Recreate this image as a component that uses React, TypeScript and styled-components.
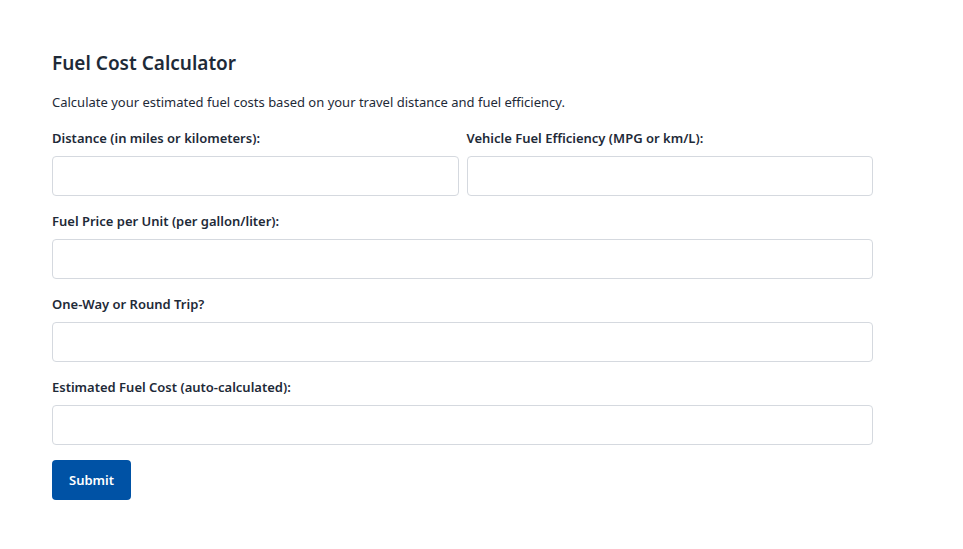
import React, { FC } from 'react'
import styled, { createGlobalStyle } from 'styled-components'

const GlobalStyle = createGlobalStyle`
  body {
    margin: 0;
    background: #fff;
    font-family: 'Noto Sans', 'Open Sans', sans-serif;
    color: #1e2a38;
  }
`

const Page = styled.div`
  width: 821px;
  padding: 50px 0 0 52px;
`

const Title = styled.h2`
  margin: 0 0 16px;
  font-size: 19px;
  line-height: 26px;
  font-weight: 600;
`

const Intro = styled.p`
  margin: 0 0 17px;
  font-size: 13px;
  line-height: 20px;
`

const Form = styled.form`
  display: flex;
  flex-direction: column;
  gap: 16px;
`

const Row = styled.div`
  display: grid;
  grid-template-columns: 1fr 1fr;
  gap: 8px;
`

const Field = styled.div`
  display: flex;
  flex-direction: column;
`

const Label = styled.label`
  font-size: 13px;
  line-height: 18px;
  font-weight: 600;
  margin-bottom: 9px;
`

const Input = styled.input`
  box-sizing: border-box;
  height: 40px;
  width: 100%;
  border: 1px solid #d5d9df;
  border-radius: 4px;
  background: #fff;
  font: inherit;
`

const Submit = styled.button`
  align-self: flex-start;
  margin-top: -1px;
  width: 79px;
  height: 40px;
  border: none;
  border-radius: 4px;
  background: #0052a5;
  color: #fff;
  font-family: inherit;
  font-size: 13px;
  font-weight: 600;
`

const FormField: FC<{ label: string }> = ({ label }) => (
  <Field>
    <Label>{label}</Label>
    <Input type="text" />
  </Field>
)

const App: FC = () => (
  <>
    <GlobalStyle />
    <Page>
      <Title>Fuel Cost Calculator</Title>
      <Intro>Calculate your estimated fuel costs based on your travel distance and fuel efficiency.</Intro>
      <Form onSubmit={(e) => e.preventDefault()}>
        <Row>
          <FormField label="Distance (in miles or kilometers):" />
          <FormField label="Vehicle Fuel Efficiency (MPG or km/L):" />
        </Row>
        <FormField label="Fuel Price per Unit (per gallon/liter):" />
        <FormField label="One-Way or Round Trip?" />
        <FormField label="Estimated Fuel Cost (auto-calculated):" />
        <Submit type="submit">Submit</Submit>
      </Form>
    </Page>
  </>
)

export default App
